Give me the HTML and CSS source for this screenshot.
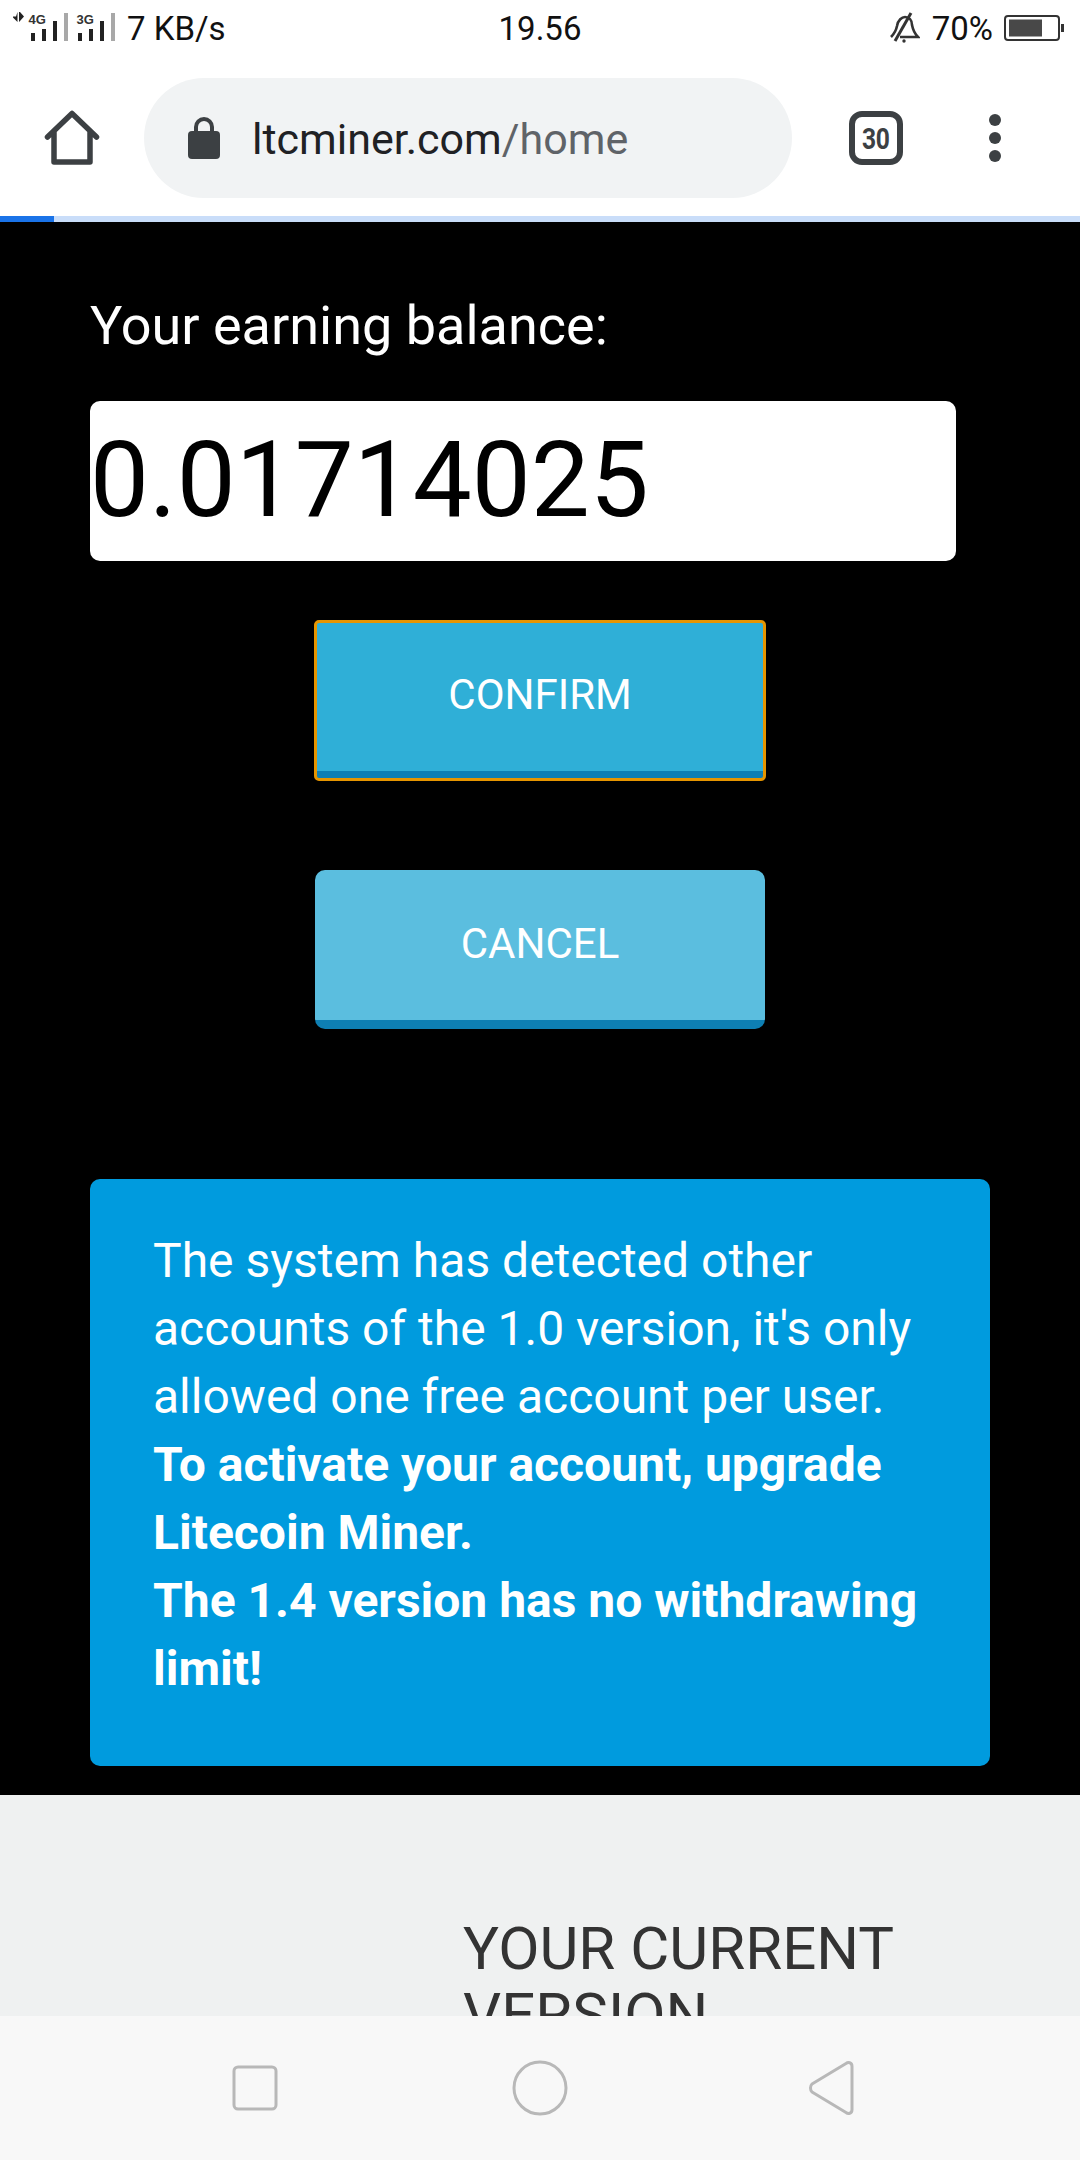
FILE: index.html
```html
<!DOCTYPE html>
<html lang="en">
<head>
<meta charset="utf-8">
<title>ltcminer.com/home</title>
<link rel="stylesheet" href="styles.css">
</head>
<body>
<div class="phone">
  <header class="status">
    <div class="status-left">
      <svg class="signal" width="118" height="56" viewBox="0 0 118 56">
        <path d="M17.500 12v10l-4.500-4.500v-1h3zM19 12v10l1-1 4-4.500-4-4.500z" fill="#222"/>
        <text x="28.500" y="24" class="sig-text">4G</text>
        <rect x="31" y="33" width="4" height="8" fill="#222"/><rect x="42" y="29" width="4" height="12" fill="#222"/><rect x="53" y="21" width="4" height="20" fill="#222"/><rect x="64" y="13" width="4" height="28" fill="#a8a8a8"/>
        <text x="76.500" y="24" class="sig-text">3G</text>
        <rect x="78" y="33" width="4" height="8" fill="#222"/><rect x="89" y="29" width="4" height="12" fill="#222"/><rect x="100" y="21" width="4" height="20" fill="#222"/><rect x="111" y="13" width="4" height="28" fill="#a8a8a8"/>
      </svg>
      <span class="speed">7 KB/s</span>
    </div>
    <div class="clock">19.56</div>
    <div class="status-right">
      <svg class="bell" width="30" height="32" viewBox="0 0 30 32" fill="none" stroke="#333" stroke-width="2.600">
        <path d="M1 25c3-3 5-6 6-11 1-6 5-9 8-9 4 0 7 3 7 8 1 5 3 9 6 12H10"/>
        <path d="M21 1 5 29" stroke-width="3"/>
        <circle cx="14" cy="29" r="1.700" fill="#333" stroke="none"/>
      </svg>
      <span class="pct">70%</span>
      <svg width="60" height="30" viewBox="0 0 60 30">
        <rect x="1" y="3" width="54" height="24" rx="3" fill="none" stroke="#333" stroke-width="2"/>
        <rect x="5" y="6.500" width="33" height="17" fill="#484848"/>
        <rect x="57" y="11" width="3" height="8" fill="#333"/>
      </svg>
    </div>
  </header>

  <nav class="toolbar">
    <svg class="home-icon" width="56" height="56" viewBox="0 0 56 56" fill="none" stroke="#3c4043" stroke-width="5.500" stroke-linejoin="round" stroke-linecap="round">
      <path d="M3.500 27 28 3.500 52.500 27M10 22v30h36V22"/>
    </svg>
    <div class="omnibox">
      <svg width="32" height="42" viewBox="0 0 32 42">
        <path d="M8 15V10a8 8 0 0 1 16 0v5" fill="none" stroke="#3c4043" stroke-width="4"/>
        <rect x="0" y="14" width="32" height="28" rx="4" fill="#3c4043"/>
      </svg>
      <div class="url"><span class="host">ltcminer.com</span><span class="path">/home</span></div>
    </div>
    <div class="tabs"><span class="tabs-count">30</span></div>
    <div class="menu"><i></i><i></i><i></i></div>
  </nav>
  <div class="progress"><div class="progress-fill"></div></div>

  <main class="content">
    <section class="dark">
      <div class="balance-label">Your earning balance:</div>
      <div class="balance-input">0.01714025</div>
      <div class="actions">
        <button class="btn btn-confirm">CONFIRM</button>
        <button class="btn btn-cancel">CANCEL</button>
      </div>
      <div class="notice">
        The system has detected other accounts of the 1.0 version, it's only allowed one free account per user.<br>
        <strong>To activate your account, upgrade Litecoin Miner.<br>The 1.4 version has no withdrawing limit!</strong>
      </div>
    </section>
    <section class="light">
      <h2 class="version">YOUR CURRENT VERSION</h2>
    </section>
  </main>

  <footer class="navbar">
    <svg width="46" height="46" viewBox="0 0 46 46" fill="none" stroke="#b8b8b8" stroke-width="3"><rect x="2" y="2" width="42" height="42" rx="4"/></svg>
    <svg width="56" height="56" viewBox="0 0 56 56" fill="none" stroke="#b8b8b8" stroke-width="3"><circle cx="28" cy="28" r="26"/></svg>
    <svg width="46" height="54" viewBox="0 0 46 54" fill="none" stroke="#b8b8b8" stroke-width="3" stroke-linejoin="round"><path d="M38 2.500c2-1.500 6-1.500 6 3v43c0 4.500-4 4.500-6 3L4 31c-2-2-2-6 0-8z"/></svg>
  </footer>
</div>
</body>
</html>
```
FILE: styles.css
```css
* { box-sizing: border-box; }
html, body { margin: 0; padding: 0; }
body { font-family: Roboto, "Liberation Sans", sans-serif; background: #000; }
.phone { width: 1080px; height: 2160px; display: flex; flex-direction: column; overflow: hidden; background: #fff; }

.status { height: 56px; flex: none; display: grid; grid-template-columns: 1fr auto 1fr; align-items: center; color: #111; font-size: 33px; background: #fff; }
.status-left { display: flex; align-items: center; gap: 9px; }
.signal { display: block; }
.sig-text { font-size: 13px; font-weight: 700; fill: #333; font-family: "Liberation Sans", Arial, sans-serif; }
.clock { text-align: center; }
.status-right { display: flex; align-items: center; justify-content: flex-end; gap: 11px; padding-right: 16px; }
.bell { margin-right: 1px; }

.toolbar { height: 160px; flex: none; display: flex; align-items: center; padding: 4px 0 0 44px; background: #fff; }
.home-icon { flex: none; }
.omnibox { margin-left: 44px; width: 648px; height: 120px; border-radius: 60px; background: #f1f3f4; display: flex; align-items: center; gap: 32px; padding: 0 0 0 44px; }
.url { font-size: 43px; line-height: 52px; padding-top: 2px; white-space: nowrap; }
.host { color: #202124; }
.path { color: #5f6368; }
.tabs { margin-left: 57px; width: 54px; height: 54px; border: 6px solid #3c4043; border-radius: 13px; color: #3c4043; display: flex; align-items: center; justify-content: center; }
.tabs-count { display: block; font-size: 30px; font-weight: 700; transform: scaleX(.82); letter-spacing: -.5px; }
.menu { margin-left: 86px; display: flex; flex-direction: column; gap: 6px; }
.menu i { display: block; width: 12px; height: 12px; border-radius: 50%; background: #3c4043; }

.progress { height: 6px; flex: none; background: #c9ddf9; }
.progress-fill { height: 100%; width: 54px; background: #1a73e8; }

.content { flex: 1; min-height: 0; overflow: hidden; }
.dark { background: #000; height: 1573px; padding: 74px 90px 0; color: #fff; }
.balance-label { font-size: 54px; line-height: 60px; }
.balance-input { margin-top: 45px; width: 866px; height: 160px; background: #fff; border-radius: 10px; color: #000; font-size: 105px; line-height: 160px; }
.actions { width: 900px; margin-top: 60px; display: flex; flex-direction: column; align-items: flex-start; gap: 90px; padding-left: 225px; }
.btn { display: block; width: 450px; height: 159px; border: 0; border-radius: 10px; color: #fff; font-family: inherit; font-size: 42px; padding: 0 0 12px; }
.btn-confirm { background: linear-gradient(to top, #0e7fb3 9px, #2fafd7 9px); border-radius: 4px; outline: 3px solid #e69500; outline-offset: -2px; }
.btn-cancel { background: linear-gradient(to top, #0e7fb3 9px, #5bbedf 9px); }
.notice { margin-top: 150px; width: 900px; height: 587px; background: #009bde; border-radius: 10px; padding: 48px 60px 0 63px; font-size: 48px; line-height: 68px; }
.notice strong { font-weight: 700; }

.light { background: #eff1f1; height: 300px; padding: 121px 0 0 463px; }
.version { margin: 0; width: 480px; font-size: 60px; line-height: 66px; font-weight: 400; color: #333; }

.navbar { position: absolute; left: 0; top: 2016px; width: 1080px; height: 144px; background: #f8f8f8; display: grid; grid-template-columns: 232px 46px 234px 56px 240px 46px 1fr; align-items: center; }
.navbar svg:nth-child(1) { grid-column: 2; }
.navbar svg:nth-child(2) { grid-column: 4; }
.navbar svg:nth-child(3) { grid-column: 6; }
```
